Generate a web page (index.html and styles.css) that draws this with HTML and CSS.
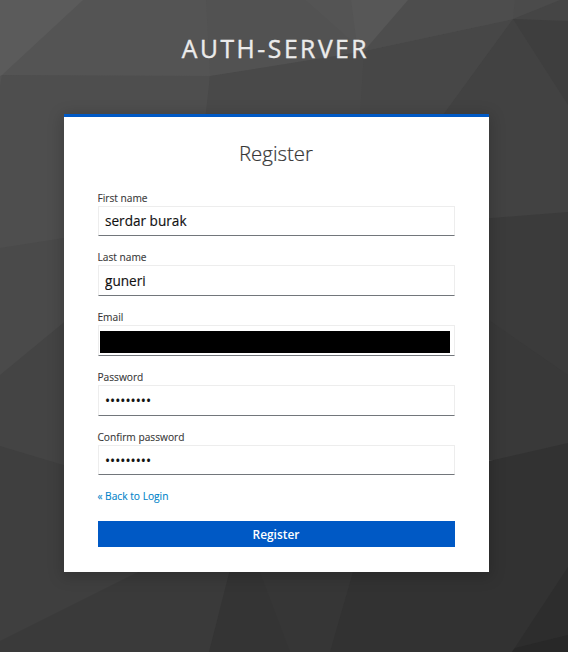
FILE: index.html
```html
<!DOCTYPE html>
<html lang="en">
<head>
<meta charset="utf-8">
<title>Register</title>
<link rel="stylesheet" href="styles.css">
</head>
<body>
<svg class="backdrop" viewBox="0 0 568 652" aria-hidden="true">
  <!-- Facets overlap the ones painted before them, so no seams show. -->
  <rect width="568" height="652" fill="#4e4e4e"/>
  <path fill="#545454" d="M0 0H210V76L2 75z"/>
  <path fill="#5b5b5b" d="M0 0H83L2 75 0 77z"/>
  <path fill="#525252" d="M0 76L2 75 0 87z"/>
  <path fill="#474747" d="M364 51L513 19 568 0V240H204L210 76z"/>
  <path fill="#494949" d="M210 76L364 51 359 130H204z"/>
  <path fill="#525252" d="M206 0H310L366 51 210 76z"/>
  <path fill="#4d4d4d" d="M400 0H568L513 19 364 51z"/>
  <path fill="#575757" d="M306 0H408L364 51z"/>
  <path fill="#545454" d="M306 0H351L357 46z"/>
  <path fill="#4b4b4b" d="M515 0H568L513 19z"/>
  <path fill="#454545" d="M560 0H568V30L513 19z"/>
  <path fill="#424242" d="M513 19L568 60V240H420L432 130z"/>
  <path fill="#3e3e3e" d="M513 19L568 21V105z"/>
  <path fill="#4a4a4a" d="M0 248L64 238H120V400H0z"/>
  <path fill="#444" d="M0 375L120 276V500H0z"/>
  <path fill="#3f3f3f" d="M0 446L120 482H300V652H0z"/>
  <path fill="#3b3b3b" d="M480 219L568 212V460H480z"/>
  <path fill="#393939" d="M480 314L568 375V460H480z"/>
  <path fill="#3a3a3a" d="M0 641L136 573 240 530V652H0z"/>
  <path fill="#343434" d="M240 530H370V652H209z"/>
  <path fill="#363636" d="M259 570H370V652H290z"/>
  <path fill="#323232" d="M365 530L480 463 568 443V652H330z"/>
  <path fill="#2d2d2d" d="M568 567V652H512z"/>
  <path fill="#282828" d="M568 635V652H512L515 648z"/>
</svg>
<div class="page">
  <header class="brand">AUTH-SERVER</header>
  <main class="card">
    <h1 class="title">Register</h1>
    <form class="form">
      <div class="field"><label for="first">First name</label><input class="input" id="first" type="text" value="serdar burak"></div>
      <div class="field"><label for="last">Last name</label><input class="input" id="last" type="text" value="guneri"></div>
      <div class="field tall"><label>Email</label><div class="input redacted"><span class="bar"></span></div></div>
      <div class="field tall"><label for="pass">Password</label><input class="input" id="pass" type="password" value="•••••••••"></div>
      <div class="field last"><label for="confirm">Confirm password</label><input class="input" id="confirm" type="password" value="•••••••••"></div>
      <a class="back" href="#">« Back to Login</a>
      <button class="submit" type="button">Register</button>
    </form>
  </main>
</div>
</body>
</html>
```
FILE: styles.css
```css
* { box-sizing: border-box; }

body {
  margin: 0;
  font-family: "Open Sans", sans-serif;
  color: #363636;
  background: #3a3a3a;
  overflow: hidden;
}

.backdrop {
  position: absolute;
  inset: 0;
  width: 568px;
  height: 652px;
}

.page {
  position: relative;
  height: 652px;
  padding-left: 64px;
}

.brand {
  width: 423px;
  height: 114px;
  padding-top: 32px;
  text-align: center;
  font-size: 24.65px;
  line-height: 34px;
  letter-spacing: 2.55px;
  color: #ebebeb;
  -webkit-text-stroke: 0.4px #ebebeb;
}

.card {
  width: 425px;
  height: 458px;
  padding: 23px 34px 0;
  border-top: 3px solid #0059c5;
  background: #fff;
  box-shadow: 0 3px 14px 2px rgba(0, 0, 0, 0.18);
}

.title {
  margin: 0 1px 24.6px 0;
  font-size: 20.4px;
  line-height: 26px;
  font-weight: 300;
  text-align: center;
  -webkit-text-stroke: 0.2px #363636;
}

.form { display: flex; flex-direction: column; }

.field {
  display: flex;
  flex-direction: column;
  margin-bottom: 14.5px;
}

.field.tall { margin-bottom: 13.9px; }
.field.last { margin-bottom: 12.9px; }

label {
  height: 15px;
  margin-left: -0.6px;
  font-size: 10.2px;
  line-height: 15px;
  -webkit-text-stroke: 0.1px #363636;
}

.input {
  width: 357px;
  height: 30.3px;
  padding: 0 6px 1px;
  border: 1px solid #ededed;
  border-bottom-color: #72767b;
  border-radius: 0;
  background: #fff;
  font: 13.6px "Open Sans", sans-serif;
  color: #111;
  -webkit-text-stroke: 0.15px #111;
  outline: 0;
}

.tall .input { height: 30.9px; }

.input[type="password"] { padding: 1px 6px 0; }

.redacted { padding: 5px 4px 2px 1px; }

.bar {
  display: block;
  height: 22px;
  background: #000;
}

.back {
  margin-left: -0.6px;
  font-size: 10.2px;
  line-height: 16px;
  color: #0083c9;
  text-decoration: none;
  -webkit-text-stroke: 0.1px #0083c9;
}

.submit {
  height: 26px;
  margin-top: 17px;
  padding: 0 1px 0 0;
  border: 0;
  background: #0059c5;
  color: #fff;
  font: 600 11.9px "Open Sans", sans-serif;
}
```
